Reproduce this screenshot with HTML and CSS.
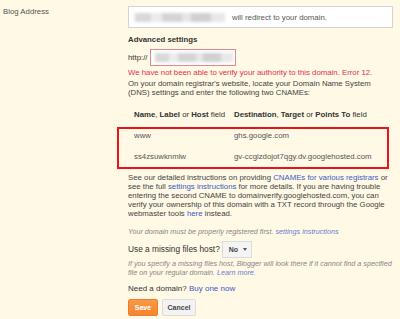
FILE: index.html
```html
<!DOCTYPE html>
<html>
    <head>
        <meta charset="utf-8">
        <link rel="stylesheet" href="styles.css">
    </head>
    <body>
        <div class="bd_row">
            <div class="bd_label">Blog Address</div>
            <div class="bd_field">
                <div class="bd_addr">
                    <span class="bd_blur bd_blur-wide"></span>
                    <span class="bd_addr_txt">will redirect to your domain.</span>
                </div>
                <div class="bd_adv">Advanced settings</div>
                <div class="bd_http">
                    <span>http://</span>
                    <span class="bd_http_input"><span class="bd_blur bd_blur-small"></span></span>
                </div>
                <div class="bd_error">We have not been able to verify your authority to this domain. Error 12.</div>
                <p class="bd_text bd_dns">On your domain registrar's website, locate your Domain Name System<br>(DNS) settings and enter the following two CNAMEs:</p>

                <div class="bd_cols bd_head">
                    <div><b>Name</b>, <b>Label</b> or <b>Host</b> field</div>
                    <div><b>Destination</b>, <b>Target</b> or <b>Points To</b> field</div>
                </div>
                <div class="bd_box">
                    <div class="bd_cols">
                        <div>www</div>
                        <div>ghs.google.com</div>
                    </div>
                    <div class="bd_cols">
                        <div>ss4zsuwknmlw</div>
                        <div>gv-ccglzdojot7qgy.dv.googlehosted.com</div>
                    </div>
                </div>

                <p class="bd_text bd_help">See our detailed instructions on providing <a href="#">CNAMEs for various registrars</a> or<br>see the full <a href="#">settings instructions</a> for more details. If you are having trouble<br>entering the second CNAME to domainverify.googlehosted.com, you can<br>verify your ownership of this domain with a TXT record through the Google<br>webmaster tools <a href="#">here</a> instead.</p>
                <p class="bd_note bd_registered">Your domain must be properly registered first. <a href="#">settings instructions</a></p>

                <div class="bd_missing">
                    <span class="bd_missing_q">Use a missing files host?</span>
                    <span class="bd_select">No <i class="bd_caret"></i></span>
                </div>
                <p class="bd_note bd_missing_note">If you specify a missing files host, Blogger will look there if it cannot find a specified<br>file on your regular domain. <a href="#">Learn more.</a></p>

                <p class="bd_text bd_need">Need a domain? <a href="#">Buy one now</a></p>

                <div class="bd_btns">
                    <button class="bd_btn bd_btn-save">Save</button>
                    <button class="bd_btn bd_btn-cancel">Cancel</button>
                </div>
            </div>
        </div>
    </body>
</html>
```
FILE: styles.css
```css
body {
    margin: 0;
    background-color: #fff9e6;
    font-family: "Liberation Sans", Arial, sans-serif;
    font-size: 7.8px;
    line-height: 9px;
    color: #444;
}
a {
    color: #3b5bc4;
    text-decoration: none;
}
p {
    margin: 0;
}
.bd_row {
    display: flex;
    padding-top: 6px;
}
.bd_label {
    width: 125px;
    padding-left: 3px;
    padding-top: 1px;
    color: #555;
}
.bd_field {
    width: 265px;
    display: flex;
    flex-direction: column;
    white-space: nowrap;
}
.bd_addr {
    height: 22px;
    box-sizing: border-box;
    background: #fff;
    border: 1px solid #d4d4d4;
    display: flex;
    align-items: center;
    padding-left: 6px;
}
.bd_blur {
    display: inline-block;
    height: 9px;
    filter: blur(1.5px);
    background: linear-gradient(90deg, #d8d8d8 0 18%, #ececec 18% 30%, #d4d4d4 30% 52%, #e6e6e6 52% 62%, #d0d0d0 62% 84%, #e8e8e8 84% 100%);
}
.bd_blur-wide {
    width: 90px;
}
.bd_blur-small {
    width: 78px;
}
.bd_addr_txt {
    margin-left: 7px;
    color: #555;
}
.bd_adv {
    margin-top: 7px;
    font-weight: bold;
    color: #333;
}
.bd_http {
    margin-top: 5px;
    display: flex;
    align-items: center;
    color: #333;
}
.bd_http_input {
    margin-left: 2px;
    width: 86px;
    height: 17px;
    box-sizing: border-box;
    background: #fff;
    border: 1px solid #e58a8a;
    display: flex;
    align-items: center;
    padding-left: 4px;
}
.bd_error {
    margin-top: 2px;
    color: #e2304a;
}
.bd_dns {
    margin-top: 2px;
}
.bd_cols {
    display: grid;
    grid-template-columns: 100px 1fr;
}
.bd_head {
    margin-top: 13px;
    margin-left: -11px;
    padding-left: 17px;
    color: #333;
}
.bd_box {
    margin-top: 8px;
    margin-left: -11px;
    width: 272px;
    height: 42px;
    box-sizing: border-box;
    border: 2px solid #e8141c;
    padding: 2px 0 0 15px;
    display: flex;
    flex-direction: column;
    gap: 12px;
    color: #555;
}
.bd_help {
    margin-top: 4px;
}
.bd_note {
    font-style: italic;
    font-size: 7.2px;
    color: #888;
}
.bd_note a {
    color: #6a7fcf;
}
.bd_registered {
    margin-top: 9px;
}
.bd_missing {
    margin-top: 5px;
    display: flex;
    align-items: center;
    height: 17px;
}
.bd_missing_q {
    font-size: 8.3px;
    color: #333;
}
.bd_select {
    margin-left: 2px;
    width: 30px;
    height: 17px;
    box-sizing: border-box;
    border: 1px solid #dcdcdc;
    background: #f4f4f4;
    display: flex;
    align-items: center;
    padding-left: 6px;
    font-size: 7px;
    font-weight: bold;
    color: #444;
}
.bd_caret {
    margin-left: 5px;
    border-left: 2.5px solid transparent;
    border-right: 2.5px solid transparent;
    border-top: 3px solid #555;
}
.bd_missing_note {
    margin-top: 1px;
}
.bd_need {
    margin-top: 7px;
    font-size: 8px;
    color: #333;
}
.bd_btns {
    margin-top: 6px;
    display: flex;
    gap: 4px;
}
.bd_btn {
    height: 17px;
    padding: 0;
    font-family: "Liberation Sans", Arial, sans-serif;
    font-size: 7px;
    font-weight: bold;
    border-radius: 2px;
}
.bd_btn-save {
    width: 30px;
    color: #fff;
    background: linear-gradient(#f89a45, #f5852f);
    border: 1px solid #ee7f2d;
}
.bd_btn-cancel {
    width: 34px;
    color: #444;
    background: #f3f3f3;
    border: 1px solid #dcdcdc;
}
```
